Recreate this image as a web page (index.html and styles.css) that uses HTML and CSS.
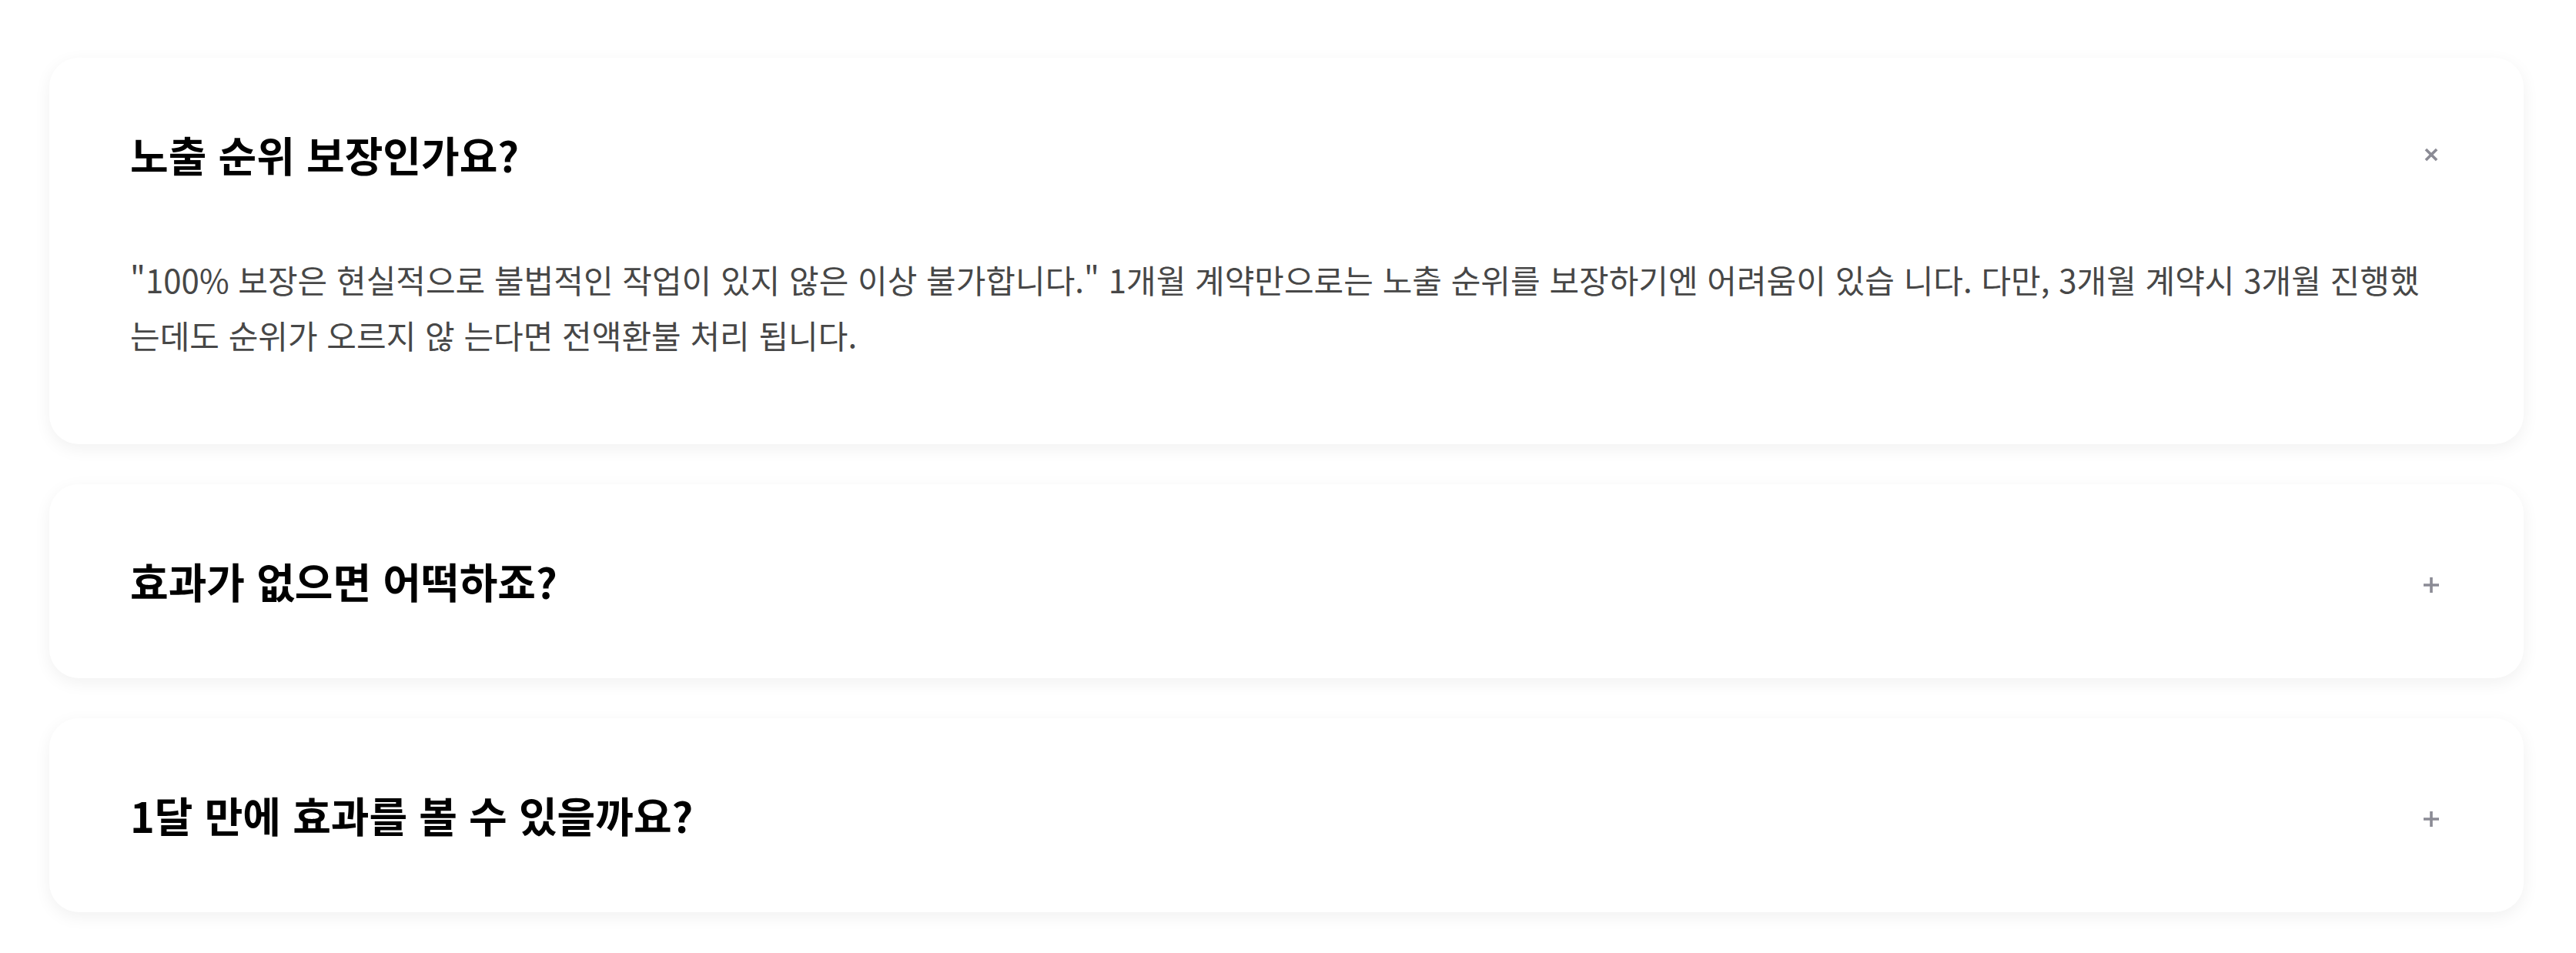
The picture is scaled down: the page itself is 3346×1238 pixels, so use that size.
FILE: index.html
```html
<!DOCTYPE html>
<html lang="ko">
<head>
    <meta charset="utf-8">
    <title>자주 묻는 질문</title>
    <link rel="stylesheet" href="styles.css">
</head>
<body>
<div class="faq-list">
    <details class="faq-item" open>
        <summary>
            <h3 class="faq-title">노출 순위 보장인가요?</h3>
            <svg class="faq-icon" viewBox="0 0 22 22" aria-hidden="true">
                <path d="M11 1v20M1 11h20"/>
            </svg>
        </summary>
        <p class="faq-answer">"100% 보장은 현실적으로 불법적인 작업이 있지 않은 이상 불가합니다." 1개월 계약만으로는 노출 순위를 보장하기엔 어려움이 있습 니다. 다만, 3개월 계약시 3개월 진행했는데도 순위가 오르지 않 는다면 전액환불 처리 됩니다.</p>
    </details>
    <details class="faq-item">
        <summary>
            <h3 class="faq-title">효과가 없으면 어떡하죠?</h3>
            <svg class="faq-icon" viewBox="0 0 22 22" aria-hidden="true">
                <path d="M11 1v20M1 11h20"/>
            </svg>
        </summary>
    </details>
    <details class="faq-item">
        <summary>
            <h3 class="faq-title">1달 만에 효과를 볼 수 있을까요?</h3>
            <svg class="faq-icon" viewBox="0 0 22 22" aria-hidden="true">
                <path d="M11 1v20M1 11h20"/>
            </svg>
        </summary>
    </details>
</div>
</body>
</html>
```

FILE: styles.css
```css
body {
    margin: 0;
    padding: 75px 68px 60px 64px;
    background: #fff;
    font-family: "Noto Sans CJK KR", "Noto Sans", sans-serif;
}
.faq-list {
    display: flex;
    flex-direction: column;
    gap: 52px;
}
.faq-item {
    background: #fff;
    border-radius: 38px;
    box-shadow: 0 6px 22px rgba(0, 0, 0, 0.06);
}
.faq-item summary {
    display: flex;
    align-items: center;
    justify-content: space-between;
    padding: 88px 109px 88px 105px;
    list-style: none;
    cursor: pointer;
}
.faq-item summary::-webkit-details-marker { display: none; }
.faq-title {
    margin: 0;
    font-size: 54px;
    font-weight: 700;
    line-height: 76px;
    color: #000;
}
.faq-icon {
    width: 22px;
    height: 22px;
    margin-top: 10px;
    fill: none;
    stroke: #8b8b95;
    stroke-width: 3.6;
}
.faq-item[open] .faq-icon {
    margin-top: 0;
    transform: rotate(45deg);
}
.faq-answer {
    margin: 0;
    padding: 0 104px 106px 105px;
    font-size: 42px;
    line-height: 72px;
    color: #474747;
}
```
